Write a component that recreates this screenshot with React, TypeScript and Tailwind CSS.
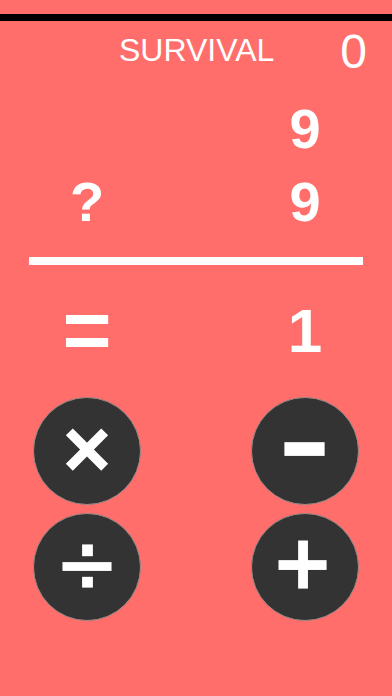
import React from "react";

// 演算子ボタンのアイコン
const OpIcon = ({ op }: { op: "mul" | "sub" | "div" | "add" }) => {
  if (op === "mul") {
    return (
      <svg viewBox="0 0 108 108" className="h-full w-full">
        <path d="M36 34.5 L72 70.5 M72 34.5 L36 70.5" stroke="#fff" strokeWidth={10} />
      </svg>
    );
  }
  if (op === "sub") {
    return (
      <svg viewBox="0 0 108 108" className="h-full w-full">
        <rect x={33} y={45} width={41} height={14} fill="#fff" />
      </svg>
    );
  }
  if (op === "div") {
    return (
      <svg viewBox="0 0 108 108" className="h-full w-full">
        <rect x={29} y={49} width={50} height={9} fill="#fff" />
        <rect x={49} y={31} width={11} height={12} fill="#fff" />
        <rect x={49} y={64} width={11} height={11} fill="#fff" />
      </svg>
    );
  }
  return (
    <svg viewBox="0 0 108 108" className="h-full w-full">
      <rect x={27} y={47} width={49} height={10} fill="#fff" />
      <rect x={47} y={27} width={10} height={49} fill="#fff" />
    </svg>
  );
};

const OpButton = ({ op }: { op: "mul" | "sub" | "div" | "add" }) => (
  <button className="h-[108px] w-[108px] rounded-full border border-[#a08a88] bg-[#333333]">
    <OpIcon op={op} />
  </button>
);

export default function App() {
  return (
    <div
      className="flex h-[696px] w-[392px] flex-col overflow-hidden bg-[#ff6e6b] text-white"
      style={{ fontFamily: '"Liberation Sans", Arial, sans-serif' }}
    >
      {/* 上の黒いバー */}
      <div className="mt-[14px] h-[7px] bg-black" />

      {/* ヘッダー */}
      <div className="flex h-[71px] items-start justify-end gap-[66px] pr-[25px]">
        <span className="mt-[13px] text-[32px] leading-none">SURVIVAL</span>
        <span className="mt-[7px] text-[48px] leading-none">0</span>
      </div>

      {/* 問題 */}
      <div className="grid grid-cols-[108px_108px] justify-between px-[33px] text-[56px] font-bold leading-[73px]">
        <span />
        <span className="text-center">9</span>
        <span className="text-center">?</span>
        <span className="text-center">9</span>
      </div>

      <div className="mx-[29px] mt-[19px] h-[8px] bg-white" />

      {/* 答え */}
      <div className="mt-[29px] grid h-[73px] grid-cols-[108px_108px] justify-between px-[33px] font-bold">
        <span className="text-center text-[84px] leading-[73px]">=</span>
        <span className="text-center text-[62px] leading-[73px]">1</span>
      </div>

      {/* 演算子ボタン */}
      <div className="mt-[30px] grid grid-cols-[108px_108px] justify-between gap-y-[8px] px-[33px]">
        <OpButton op="mul" />
        <OpButton op="sub" />
        <OpButton op="div" />
        <OpButton op="add" />
      </div>
    </div>
  );
}
